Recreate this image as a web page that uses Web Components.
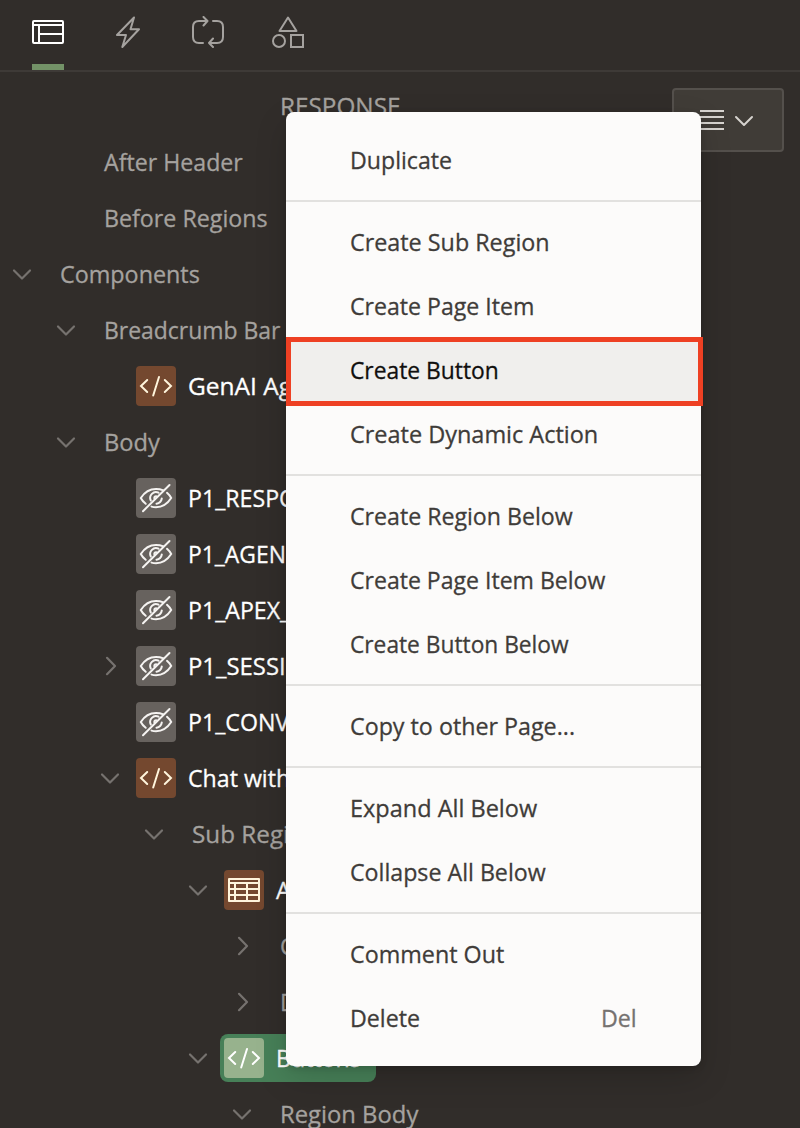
<!DOCTYPE html>
<html lang="en"><head><meta charset="utf-8"><title>Page Designer</title>
<style>
html,body{margin:0;height:100%;overflow:hidden;background:#312d2a;font-family:"Open Sans","Noto Sans",sans-serif;font-size:24.5px}
</style></head><body>
<page-designer></page-designer>
<script>
const ICONS = {
  code: '<path d="M11.200 14 5 20l6.200 6M28.800 14 35 20l-6.200 6M23 11l-5.800 18.500"/>',
  hidden: '<path d="M15.500 28.600Q17.700 29.200 20 29.200C27 29.200 32 25 35.200 20Q34 17.500 31 14.800M27.300 12.400Q24 11 20 11C13 11 8 15 4.800 20Q6.500 23.300 9.700 25.800M25.800 20.500Q25 25 20.500 25.700M14.800 22.500A5.800 5.800 0 0 1 22.500 14.700M18.300 20.200Q18.300 18.400 20.200 18.300"/><path d="M33.500 7 7 33.200"/>',
  grid: '<path d="M5 9h30v22H5zM5 13h30M5 19h30M5 25h30M11 13v18M23 13v18" stroke-linejoin="round"/>'
};
const define = (name, render) => customElements.define(name, class extends HTMLElement {
  connectedCallback() {
    if (this.shadowRoot) return;
    this.attachShadow({mode: 'open'}).innerHTML = render(this);
  }
});

/* Single-line label; "w" condenses it to a given width, otherwise the common ratio applies. */
customElements.define('fit-label', class extends HTMLElement {
  connectedCallback() {
    this.attachShadow({mode: 'open'}).innerHTML = `<style>
      :host{display:block;white-space:nowrap;line-height:28px;-webkit-text-stroke:.3px currentColor}
      span{display:inline-block;transform-origin:0 50%}</style><span><slot></slot></span>`;
    const s = this.shadowRoot.querySelector('span'), w = +this.getAttribute('w');
    s.style.transform = `scaleX(${w ? w / s.offsetWidth : .945})`;
    if (w) this.style.width = w + 'px';
  }
});

define('tool-bar', () => `<style>
  :host{display:flex;border-bottom:2px solid #3e3a37;padding-left:32px;gap:48px;box-sizing:border-box;height:72px}
  div{width:32px;height:70px;box-sizing:border-box;padding-top:16px}
  .on{border-bottom:6px solid #739267}
  svg{display:block;fill:none;stroke:#a5a29f;stroke-width:2;stroke-linecap:round;stroke-linejoin:round}
  .on svg{stroke:#fff}</style>
  <div class="on"><svg width="32" height="32"><rect x="1" y="5" width="30" height="22" rx="1"/><path d="M1 9h30M7 9v18M7 18h24"/></svg></div>
  <div><svg width="32" height="32"><path d="M22 1.500 5 19h9L10.300 31 27 13.300h-8.500z"/></svg></div>
  <div><svg width="34" height="32"><path d="M15 5H7Q1 5 1 11v10Q1 27 7 27h4M11.500 1 15.500 5l-4 4.500M21 5h4q6 0 6 6v10q0 6-6 6h-8M21 22.500 17 27l4 4"/></svg></div>
  <div><svg width="32" height="32"><path d="M16 1.500 24.500 15H7.500z"/><circle cx="7" cy="25" r="6"/><path d="M19 19h12v12H19z" stroke-linejoin="miter"/></svg></div>`);

define('tree-row', el => {
  const c = el.getAttribute('chev'), i = el.getAttribute('icon');
  return `<style>
  :host{display:flex;align-items:center;height:56px;padding-left:${12 + 44 * el.getAttribute('level')}px;color:${i ? '#fff' : '#a5a29f'}}
  .c{width:20px;height:20px;flex:none;margin-right:${i ? 12 : 28}px;fill:none;stroke:#76726f;stroke-width:2.2;stroke-linecap:round;stroke-linejoin:round}
  .body{display:flex;align-items:center;gap:12px;height:48px;box-sizing:border-box;padding:4px;border-radius:8px;${i ? '' : 'padding-left:0;'}}
  :host([selected]) .body{background:#478058;width:156px}
  .i{width:40px;height:40px;flex:none;border-radius:4px;background:${el.hasAttribute('selected') ? '#97b28d' : i === 'hidden' ? '#67625e' : '#74482f'};
    fill:none;stroke:${i === 'hidden' ? '#f5f3f1' : el.hasAttribute('selected') ? '#fff' : '#fff5dc'};stroke-width:2;stroke-linecap:round}
  </style><svg class="c" viewBox="0 0 20 20">${c === 'down' ? '<path d="m2 6.500 8 8 8-8"/>' : c === 'right' ? '<path d="m7 1.800 8 8.200-8 8.200"/>' : ''}</svg>
  <div class="body">${i ? `<svg class="i" viewBox="0 0 40 40">${ICONS[i]}</svg>` : ''}<slot></slot></div>`;
});

define('view-button', () => `<style>
  :host{position:absolute;left:672px;top:88px;width:112px;height:64px;box-sizing:border-box;border:2px solid #54504c;border-radius:4px;background:#403c37}
  svg{display:block;fill:none;stroke:#d6d3cf;stroke-width:2}</style>
  <svg width="108" height="60"><path d="M26 21h24M26 27h24M26 33h24M26 39h24"/><path d="m62 27 8 8 8-8" stroke-linecap="round" stroke-linejoin="round"/></svg>`);

define('context-menu', () => `<style>
  :host{position:absolute;left:286px;top:112px;width:415px;height:954px;box-sizing:border-box;padding:16px 0;background:#fcfbfa;border-radius:8px;box-shadow:0 12px 32px rgba(0,0,0,.16),0 2px 6px rgba(0,0,0,.14)}
  </style><slot></slot>`);
define('menu-item', () => `<style>
  :host{display:flex;align-items:center;justify-content:space-between;height:64px;padding:0 64px;color:#3f3c39;position:relative}
  :host([active]){background:#f0efed;color:#100f0e}
  :host([active])::after{content:"";position:absolute;left:0;top:-1px;width:417px;height:69px;box-sizing:border-box;border:5px solid #ee4023}
  ::slotted([slot=key]){color:#757270}
  </style><slot></slot><slot name="key"></slot>`);
define('menu-separator', () => `<style>:host{display:block;height:2px;margin:8px 0;background:#e2e1df}</style>`);

const row = (level, text, w, chev = '', icon = '', extra = '') =>
  `<tree-row level="${level}" chev="${chev}" icon="${icon}" ${extra}><fit-label ${w ? `w="${w}"` : ''}>${text}</fit-label></tree-row>`;
const item = (text, w, extra = '', key = '') => `<menu-item ${extra}><fit-label w="${w}">${text}</fit-label>${key}</menu-item>`;
const sep = '<menu-separator></menu-separator>';

define('page-designer', () => `<style>
  :host{display:block;position:relative;width:800px;height:1128px;overflow:hidden;background:#312d2a}
  .tree{padding-top:6px}</style>
  <tool-bar></tool-bar>
  <div class="tree">
  ${row(5, 'RESPONSE', 120)}${row(1, 'After Header', 139)}${row(1, 'Before Regions', 164)}
  ${row(0, 'Components', 140, 'down')}${row(1, 'Breadcrumb Bar', 176, 'down')}${row(2, 'GenAI Age', 118, '', 'code')}
  ${row(1, 'Body', 56, 'down')}${row(2, 'P1_RESPO', 0, '', 'hidden')}${row(2, 'P1_AGEN', 98, '', 'hidden')}
  ${row(2, 'P1_APEX_', 0, '', 'hidden')}${row(2, 'P1_SESSIO', 116, 'right', 'hidden')}${row(2, 'P1_CONV', 0, '', 'hidden')}
  ${row(2, 'Chat with', 0, 'down', 'code')}${row(3, 'Sub Regi', 97, 'down')}${row(4, 'A', 0, 'down', 'grid')}
  ${row(5, 'C', 0, 'right')}${row(5, 'D', 0, 'right')}${row(4, 'Buttons', 85, 'down', 'code', 'selected')}${row(5, 'Region Body', 138, 'down')}
  </div>
  <view-button></view-button>
  <context-menu>
  ${item('Duplicate', 102)}${sep}
  ${item('Create Sub Region', 200)}${item('Create Page Item', 184)}${item('Create Button', 149, 'active')}${item('Create Dynamic Action', 248)}${sep}
  ${item('Create Region Below', 223)}${item('Create Page Item Below', 255)}${item('Create Button Below', 219)}${sep}
  ${item('Copy to other Page...', 225)}${sep}
  ${item('Expand All Below', 187)}${item('Collapse All Below', 196)}${sep}
  ${item('Comment Out', 154)}${item('Delete', 70, '', '<fit-label slot="key" w="36">Del</fit-label>')}
  </context-menu>`);
</script>
</body></html>
